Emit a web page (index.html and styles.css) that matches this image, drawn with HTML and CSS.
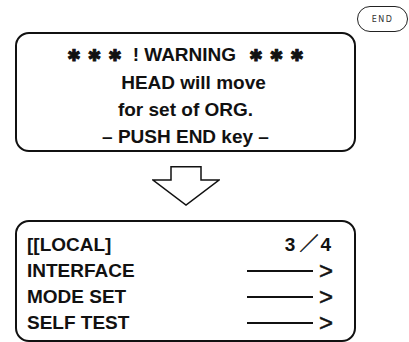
FILE: index.html
```html
<!DOCTYPE html>
<html lang="en">

<head>
    <meta charset="UTF-8">
    <meta name="viewport" content="width=device-width, initial-scale=1.0">
    <title>Head Warning</title>
    <link rel="stylesheet" href="styles.css">
</head>

<body>
    <div class="page">
        <div class="key-row">
            <span class="key">END</span>
        </div>

        <div class="panel panel-warning">
            <div class="line"><span class="stars stars-left">✱ ✱ ✱</span>! WARNING <span class="stars stars-right">✱ ✱ ✱</span></div>
            <div class="line line-indent">HEAD will move</div>
            <div class="line">for set of ORG.</div>
            <div class="line">– PUSH END key –</div>
        </div>

        <div class="arrow">
            <svg width="68" height="42" viewBox="0 0 68 42">
                <path d="M19 0.75 H49 V14 H67 L34 39 L1 14 H19 Z" fill="none" stroke="#111" stroke-width="1.5" stroke-linejoin="miter" />
            </svg>
        </div>

        <div class="panel panel-menu">
            <div class="row">
                <span>[[LOCAL]</span>
                <span class="page-no">3<span class="slash">／</span>4</span>
            </div>
            <div class="row">
                <span>INTERFACE</span>
                <span class="go"><span class="bar"></span><span class="chev">&gt;</span></span>
            </div>
            <div class="row">
                <span>MODE SET</span>
                <span class="go"><span class="bar"></span><span class="chev">&gt;</span></span>
            </div>
            <div class="row">
                <span>SELF TEST</span>
                <span class="go"><span class="bar"></span><span class="chev">&gt;</span></span>
            </div>
        </div>
    </div>
</body>

</html>
```

FILE: styles.css
```css
body {
    margin: 0;
    background: #fff;
    color: #111;
    font-family: "Liberation Sans", "Noto Sans CJK JP", sans-serif;
}

.page {
    width: 409px;
    height: 342px;
    overflow: hidden;
    display: flex;
    flex-direction: column;
}

.key-row {
    display: flex;
    justify-content: flex-end;
    height: 32px;
    padding-right: 1px;
}

.key {
    margin-top: 6px;
    width: 49px;
    height: 24px;
    border: 1px solid #222;
    border-radius: 13px;
    display: flex;
    align-items: center;
    justify-content: center;
    font-family: "DejaVu Sans", sans-serif;
    font-size: 8px;
    letter-spacing: 1.5px;
    color: #333;
}

.panel {
    margin-left: 15px;
    width: 337px;
    border: 2px solid #111;
    border-radius: 14px;
    font-weight: bold;
    font-size: 19px;
}

.panel-warning {
    height: 115px;
    padding-top: 7px;
    box-sizing: content-box;
    display: flex;
    flex-direction: column;
    align-items: center;
    line-height: 27px;
}

.panel-warning .line {
    white-space: pre;
}

.stars {
    font-family: "DejaVu Sans", sans-serif;
    font-size: 16px;
    font-weight: normal;
    word-spacing: 2px;
    -webkit-text-stroke: 1px #111;
}

.stars-left {
    margin-right: 11px;
}

.stars-right {
    margin-left: 8px;
}

.line-indent {
    padding-left: 16px;
}

.arrow {
    display: flex;
    justify-content: center;
    width: 371px;
    margin-top: 14px;
}

.panel-menu {
    margin-top: 12px;
    height: 127px;
    padding: 10px 21px 0 10px;
    width: 306px;
    line-height: 26px;
}

.row {
    display: flex;
    justify-content: space-between;
    align-items: center;
    height: 26px;
}

.page-no {
    padding-right: 2px;
}

.slash {
    font-weight: normal;
    margin: 0 2px 0 4px;
    -webkit-text-stroke: 0.5px #111;
}

.go {
    display: flex;
    align-items: center;
    gap: 6px;
}

.bar {
    width: 66px;
    height: 2px;
    background: #111;
}

.chev {
    font-weight: normal;
    font-size: 24px;
    line-height: 20px;
    -webkit-text-stroke: 0.5px #111;
}
```
